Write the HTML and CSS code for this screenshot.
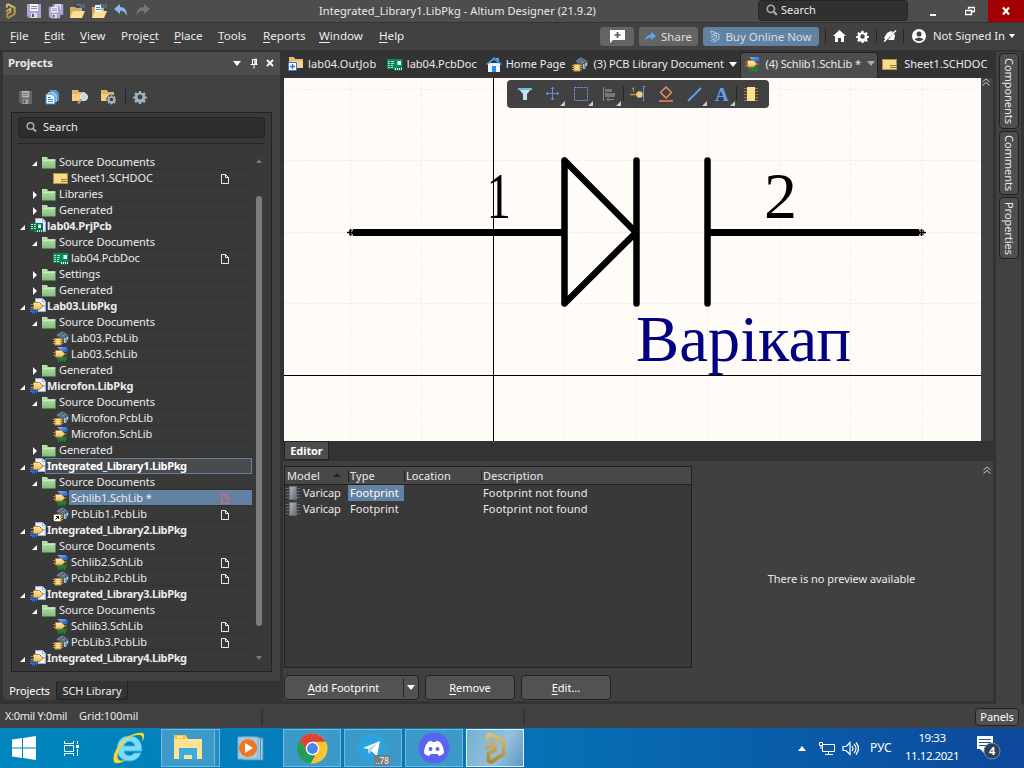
FILE: index.html
```html
<!DOCTYPE html>
<html lang="en">
<head>
<meta charset="utf-8">
<title>Integrated_Library1.LibPkg - Altium Designer (21.9.2)</title>
<link rel="stylesheet" href="styles.css">
</head>
<body>
<svg class="defs" width="0" height="0">
  <defs>
    <linearGradient id="gGreen" x2="0" y2="1"><stop stop-color="#bfe6b3"/><stop offset="1" stop-color="#7fbd77"/></linearGradient>
    <linearGradient id="gGold" x2="0" y2="1"><stop stop-color="#fff0b0"/><stop offset="1" stop-color="#e9b95c"/></linearGradient>
    <linearGradient id="gBlue" x2="1" y2="1"><stop stop-color="#7fb4ff"/><stop offset="1" stop-color="#1c55c8"/></linearGradient>
    <linearGradient id="gGray" x2="1" y2="1"><stop stop-color="#b4b9c2"/><stop offset="1" stop-color="#626872"/></linearGradient>
    <linearGradient id="gAlt" gradientUnits="userSpaceOnUse" x1="0" y1="0" x2="0" y2="34"><stop stop-color="#e0c47c"/><stop offset="1" stop-color="#a98436"/></linearGradient>
    <symbol id="folder" viewBox="0 0 16 16"><path d="M0 3h5l1 2h7.500v9.500H0z" fill="url(#gGreen)"/><path d="M.5 6.500h12.500" stroke="#c8ebbe"/></symbol>
    <symbol id="sheet" viewBox="0 0 16 16"><rect x="0.500" y="3.500" width="14" height="10" fill="#f8dc86" stroke="#b09247"/><path d="M8 9.500h6M8 11.500h6" stroke="#8f7942"/></symbol>
    <symbol id="pcb" viewBox="0 0 16 16"><path d="M0 3h15.500v9H15v2.500H7V13H0z" fill="#0a8a5a"/><path d="M1 5.500h2M1 7.500h2M1 9.500h2M1 11.500h2M4 5.500h3M4 7.500h3M4 9.500h2M4 11.500h2" stroke="#a6e5c6"/><rect x="10.500" y="5" width="3.500" height="4" fill="#f0fff6"/><path d="M8.500 12v2M10.500 12v2M12.500 12v2M14.500 12v2" stroke="#e7f7ce"/></symbol>
    <symbol id="prj" viewBox="0 0 16 16"><path d="M5.500 0.500h7l3 3v10h-10z" fill="#e9eefc" stroke="#9fadd3"/><path d="M12.500 .5v3h3" fill="#fff" stroke="#a0add3"/><path d="M0 5h13v9H6v-1H0z" fill="#07704a"/><path d="M1 6.500h2M1 8.500h2M1 10.500h2M4 6.500h2M4 8.500h2M4 10.500h2M7.500 12v2M9.500 12v2M11.500 12v2" stroke="#bdeacb"/><rect x="8" y="6.500" width="3" height="3.500" fill="#eafff5"/></symbol>
    <symbol id="pkg" viewBox="0 0 16 16"><path d="M5.500 .5h7l3 3v10h-10z" fill="#e9eefc" stroke="#a1afd4"/><path d="M12.500 .5v3h3" fill="#fff" stroke="#a1afd4"/><path d="M1 9h7v5H1z" fill="#2259b8"/><path d="M2.500 13v2.500M4.500 13v2.500M6.500 13v2.500M0 9.500h2M0 11.500h2M0 13.500h2" stroke="#2b77e8"/><path d="M3.500 4.500h6l3.500 3.500-3.500 3.500h-6zM1 6.500h2M1 9.500h2M13 8h2" fill="url(#gGold)" stroke="#b58632"/></symbol>
    <symbol id="sch" viewBox="0 0 16 16"><path d="M4 1h8a3 3 0 0 1 2 5H6q2-2-2-5z" fill="url(#gBlue)"/><path d="M5 11h8v3H5zM5.500 13v3M7.500 13v3M9.500 13v3M11.500 13v3" fill="#187c28" stroke="#28832d"/><path d="M2.500 4.500h6l3.500 3.500-3.500 3h-6zM0 6.500h2M0 9.500h2M12 8h2" fill="url(#gGold)" stroke="#ae8437"/></symbol>
    <symbol id="lib" viewBox="0 0 16 16"><path d="M3 5l6-4 7 4v4l-5 4-5-4z" fill="#46596a"/><path d="M4 5l5-3.500L14 5l-4 3z" fill="#7d93a4"/><path d="M6 4l5 3.500M8 2.500l5 3.500M6.500 6.500l5-4" stroke="#475b6c"/><path d="M11.500 8v4.500h1.500V8l1.500-1v3" fill="none" stroke="#b4cdd9"/><path d="M0 9.500h10M0 11.500h10M0 13.500h10" stroke="#c59a41"/><rect x="2" y="8.500" width="6" height="6.500" fill="#f7d78b" stroke="#bb9140"/></symbol>
    <symbol id="pagedoc" viewBox="0 0 10 12"><path d="M1.500 1.500h4l3 3v6h-7zM5.500 1.500v3h3" fill="none" stroke="currentColor"/></symbol>
    <symbol id="floppy" viewBox="0 0 16 16"><path d="M1 1h14v14H3l-2-2z" fill="currentColor"/><path d="M4 1h8v7H4z" fill="#f0f0f8"/><path d="M5 3.500h6M5 5.500h6" stroke="#888899"/><path d="M5 10h6v5H5z" fill="#ddd"/><path d="M6 11h2v3H6z" fill="#555570"/></symbol>
    <symbol id="open" viewBox="0 0 16 16"><path d="M1 4h5l1 1h6v10H1z" fill="#d8ab60"/><path d="M1 15l3-7h12l-3 7z" fill="#ffdf96"/><path d="M8 2q4-2 5 2m-2 0h4v-3" fill="none" stroke="#4d84a8" stroke-width="1.200"/></symbol>
    <symbol id="alt" viewBox="0 0 24 34"><path d="M4 10V4l3-1.500L21 9.500v14L8 31.500M2 18l10-6v7l-7 4v7.500l3 1.500 7-4.500" fill="none" stroke="url(#gAlt)" stroke-width="4"/></symbol>
    <symbol id="search" viewBox="0 0 16 16"><circle cx="6.500" cy="6.500" r="4.800" fill="none" stroke="currentColor" stroke-width="2.200"/><path d="M10 10l4.500 4.500" stroke="currentColor" stroke-width="3"/></symbol>
    <symbol id="gear" viewBox="0 0 16 16"><path fill-rule="evenodd" fill="currentColor" d="M6.800 1h2.400l.4 2 1.500.6 1.700-1.100 1.700 1.700-1.100 1.700.6 1.500 2 .4v1.600l-2 .5-.6 1.500 1.100 1.700-1.700 1.700-1.700-1.100-1.500.6-.4 2H6.800l-.4-2-1.500-.6-1.700 1.100-1.700-1.700 1.100-1.700-.6-1.500-2-.4V7.800l2-.4.6-1.500-1.100-1.700 1.700-1.700 1.700 1.100 1.500-.6zM8 5.200a2.800 2.800 0 1 0 0 5.600 2.800 2.800 0 0 0 0-5.600z"/></symbol>
    <symbol id="chip" viewBox="0 0 14 16"><path d="M0 3.500h14M0 6.500h14M0 9.500h14M0 12.500h14" stroke="#676b72"/><rect x="3.500" y="1.500" width="7" height="13" fill="url(#gGray)" stroke="#686d75"/></symbol>
    <symbol id="chev" viewBox="0 0 8 8"><path d="M.5 4L4 1l3.500 3M.5 7.500L4 4.500l3.500 3" fill="none" stroke="#ccc"/></symbol>
  </defs>
</svg>
<div class="app">
  <header class="titlebar">
    <div class="quick">
      <svg class="q-logo" width="11" height="16"><use href="#alt"/></svg>
      <svg class="lilac" width="16" height="16"><use href="#floppy"/></svg>
      <svg class="lilac" width="16" height="16" viewBox="0 0 16 16"><use href="#floppy" x="4" width="12" height="13"/><use href="#floppy" x="0" y="3" width="13" height="13"/></svg>
      <svg width="16" height="16"><use href="#open"/></svg>
      <svg width="16" height="16" viewBox="0 0 16 16"><use href="#open"/><path d="M4 2h6l1 7H4z" fill="#eef3ff"/><path d="M5 4.500h4M5 6.500h5" stroke="#448ac0"/></svg>
      <svg width="16" height="16" viewBox="0 0 16 16"><path d="M1 6l6-5v3q7 0 7 9-3-6-7-5v3z" fill="#8ab8f3"/></svg>
      <svg width="16" height="16" viewBox="0 0 16 16"><path d="M15 6L9 1v3Q2 4 1 13q3-6 8-5v3z" fill="#777"/></svg>
    </div>
    <div class="title">Integrated_Library1.LibPkg - Altium Designer (21.9.2)</div>
    <div class="topsearch"><svg width="12" height="12"><use href="#search"/></svg>Search</div>
    <div class="winbtn min"><svg width="10" height="12" viewBox="0 0 10 12"><path d="M2 9h6" stroke="#fff" stroke-width="2"/></svg></div>
    <div class="winbtn"><svg width="10" height="10" viewBox="0 0 10 10"><path d="M3.500 3V1.500h6v4H7M.5 4.500h6v4h-6zM3 1.500h7M0 4.500h7" fill="none" stroke="#fff" stroke-width="1.300"/></svg></div>
    <div class="winbtn close"><svg width="10" height="10" viewBox="0 0 10 10"><path d="M2 1.500l6 7M8 1.500l-6 7" stroke="#fff" stroke-width="2.200"/></svg></div>
  </header>
  <nav class="menubar">
    <div class="menus">
      <span><u>F</u>ile</span><span><u>E</u>dit</span><span><u>V</u>iew</span><span>Proje<u>c</u>t</span><span><u>P</u>lace</span><span><u>T</u>ools</span><span><u>R</u>eports</span><span><u>W</u>indow</span><span><u>H</u>elp</span>
    </div>
    <div class="mbtn note"><svg width="17" height="13" viewBox="0 0 17 13"><path d="M1 0h15v10H4l-3 3z" fill="#fff"/><path d="M8.500 2v6M5.500 5h6" stroke="#555" stroke-width="1.600"/></svg></div>
    <div class="mbtn share"><svg width="11" height="9" viewBox="0 0 11 9"><path d="M0 8q1-5 6-5V0l5 4-5 4V5.500Q3 5 0 8z" fill="#58a9f6"/></svg>Share</div>
    <div class="mbtn buy"><svg width="10" height="13" viewBox="0 0 10 13" fill="none" stroke="#b8cfe4"><path d="M1 3V1l8 3v5l-6 3M1 5l5-1.500M1 7.500L6.500 5v3L1 10.500"/></svg>Buy Online Now</div>
    <i class="vsep"></i>
    <svg class="home" width="13" height="12" viewBox="0 0 13 12"><path d="M6.500 0l6.500 6h-2v6H8V8H5v4H2V6H0z" fill="#fff"/></svg>
    <svg class="gear" width="13" height="13"><use href="#gear"/></svg>
    <i class="vsep"></i>
    <svg class="bell" width="14" height="12" viewBox="0 0 14 12"><path d="M1 8l3-5 4-2 2 1-7 8zM5 10l6-7 1 3-1 4z" fill="#fff"/><path d="M1 11.500L13 .5" stroke="#fff" stroke-width="1.500"/></svg>
    <i class="vsep"></i>
    <svg class="user" width="14" height="14" viewBox="0 0 14 14"><circle cx="7" cy="7" r="7" fill="#fff"/><circle cx="7" cy="5" r="2.500" fill="#414141"/><path d="M2.500 10.500Q7 6.500 11.500 10.500 7 14 2.500 10.500" fill="#414141"/></svg>
    <span class="signin">Not Signed In</span><i class="down small"></i>
  </nav>
  <main class="work">
    <aside class="projects">
      <div class="phead"><b>Projects</b><i class="down"></i><svg width="8" height="11" viewBox="0 0 8 11"><path d="M2.500 1v5M5 1v5" stroke="#fff"/><path d="M5 1h1.500v5H5zM2 1.500h4M.5 6.500h7M4 6v4.500" stroke="#fff" fill="none"/></svg><svg width="8" height="8" viewBox="0 0 8 8"><path d="M1 1l6 6M7 1l-6 6" stroke="#fff" stroke-width="1.800"/></svg></div>
      <div class="pbody">
        <div class="ptools">
          <svg class="grayf" width="15" height="15"><use href="#floppy"/></svg>
          <svg width="15" height="16" viewBox="0 0 15 16"><path d="M5 1h6l3 3v8H5z" fill="#5d92cb"/><path d="M3 3h6l3 3v7H3z" fill="#9bc4ec"/><path d="M1 5h6l3 3v7H1z" fill="#eef6ff" stroke="#4387ca"/><path d="M3 8.500h3M3 10.500h5M3 12.500h5" stroke="#4387ca"/></svg>
          <svg width="17" height="16" viewBox="0 0 17 16"><path d="M0 1h6l1 2h6v9H0z" fill="#ddb56d"/><path d="M0 5h13v7H0z" fill="#f3cc82"/><circle cx="12" cy="8" r="3.500" fill="#bad8ee" stroke="#e7f3fc"/><path d="M9.500 10.500L6 14.500" stroke="#ca9342" stroke-width="2"/></svg>
          <svg class="fgear" width="17" height="16" viewBox="0 0 17 16"><path d="M0 1h6l1 2h6v9H0z" fill="#ddb56d"/><path d="M0 5h13v7H0z" fill="#f3cc82"/><circle cx="10.500" cy="10.500" r="5" fill="#414141"/><use href="#gear" x="5.500" y="5.500" width="10" height="10"/></svg>
          <i class="vsep"></i>
          <svg class="pg" width="14" height="14"><use href="#gear"/></svg>
        </div>
        <div class="treebox">
          <div class="psearch"><svg width="11" height="12"><use href="#search"/></svg>Search</div>
          <div class="treewrap">
            <div class="tree">
              <div class="row l2"><i class="exp"></i><svg><use href="#folder"/></svg><span>Source Documents</span></div>
              <div class="row l3"><i></i><svg><use href="#sheet"/></svg><span>Sheet1.SCHDOC<svg class="doc"><use href="#pagedoc"/></svg></span></div>
              <div class="row l2"><i class="col"></i><svg><use href="#folder"/></svg><span>Libraries</span></div>
              <div class="row l2"><i class="col"></i><svg><use href="#folder"/></svg><span>Generated</span></div>
              <div class="row l1"><i class="exp"></i><svg><use href="#prj"/></svg><span>lab04.PrjPcb</span></div>
              <div class="row l2"><i class="exp"></i><svg><use href="#folder"/></svg><span>Source Documents</span></div>
              <div class="row l3"><i></i><svg><use href="#pcb"/></svg><span>lab04.PcbDoc<svg class="doc"><use href="#pagedoc"/></svg></span></div>
              <div class="row l2"><i class="col"></i><svg><use href="#folder"/></svg><span>Settings</span></div>
              <div class="row l2"><i class="col"></i><svg><use href="#folder"/></svg><span>Generated</span></div>
              <div class="row l1"><i class="exp"></i><svg><use href="#pkg"/></svg><span>Lab03.LibPkg</span></div>
              <div class="row l2"><i class="exp"></i><svg><use href="#folder"/></svg><span>Source Documents</span></div>
              <div class="row l3"><i></i><svg><use href="#lib"/></svg><span>Lab03.PcbLib</span></div>
              <div class="row l3"><i></i><svg><use href="#sch"/></svg><span>Lab03.SchLib</span></div>
              <div class="row l2"><i class="col"></i><svg><use href="#folder"/></svg><span>Generated</span></div>
              <div class="row l1"><i class="exp"></i><svg><use href="#pkg"/></svg><span>Microfon.LibPkg</span></div>
              <div class="row l2"><i class="exp"></i><svg><use href="#folder"/></svg><span>Source Documents</span></div>
              <div class="row l3"><i></i><svg><use href="#lib"/></svg><span>Microfon.PcbLib</span></div>
              <div class="row l3"><i></i><svg><use href="#sch"/></svg><span>Microfon.SchLib</span></div>
              <div class="row l2"><i class="col"></i><svg><use href="#folder"/></svg><span>Generated</span></div>
              <div class="row l1 wide focus"><i class="exp"></i><svg><use href="#pkg"/></svg><span>Integrated_Library1.LibPkg</span></div>
              <div class="row l2"><i class="exp"></i><svg><use href="#folder"/></svg><span>Source Documents</span></div>
              <div class="row l3 sel"><i></i><svg><use href="#sch"/></svg><span>Schlib1.SchLib *<svg class="doc"><use href="#pagedoc"/></svg></span></div>
              <div class="row l3"><i></i><svg viewBox="0 0 16 16"><use href="#lib"/><path d="M1 9h6v6H1z" fill="#fff"/><path d="M2.500 13.500l3-3M3 10.500h2.500V13" stroke="#000" fill="none"/></svg><span>PcbLib1.PcbLib<svg class="doc"><use href="#pagedoc"/></svg></span></div>
              <div class="row l1 wide"><i class="exp"></i><svg><use href="#pkg"/></svg><span>Integrated_Library2.LibPkg</span></div>
              <div class="row l2"><i class="exp"></i><svg><use href="#folder"/></svg><span>Source Documents</span></div>
              <div class="row l3"><i></i><svg><use href="#sch"/></svg><span>Schlib2.SchLib<svg class="doc"><use href="#pagedoc"/></svg></span></div>
              <div class="row l3"><i></i><svg><use href="#lib"/></svg><span>PcbLib2.PcbLib<svg class="doc"><use href="#pagedoc"/></svg></span></div>
              <div class="row l1 wide"><i class="exp"></i><svg><use href="#pkg"/></svg><span>Integrated_Library3.LibPkg</span></div>
              <div class="row l2"><i class="exp"></i><svg><use href="#folder"/></svg><span>Source Documents</span></div>
              <div class="row l3"><i></i><svg><use href="#sch"/></svg><span>Schlib3.SchLib<svg class="doc"><use href="#pagedoc"/></svg></span></div>
              <div class="row l3"><i></i><svg><use href="#lib"/></svg><span>PcbLib3.PcbLib<svg class="doc"><use href="#pagedoc"/></svg></span></div>
              <div class="row l1 wide"><i class="exp"></i><svg><use href="#pkg"/></svg><span>Integrated_Library4.LibPkg</span></div>
            </div>
            <div class="scroll"><i class="up"></i><div class="thumb"></div><i class="dn"></i></div>
          </div>
        </div>
      </div>
      <div class="ptabs"><span class="on">Projects</span><span>SCH Library</span></div>
    </aside>
    <section class="center">
      <div class="doctabs">
        <div class="t1"><svg viewBox="0 0 16 16"><path d="M1 1h5l1 2h8v9H1z" fill="#e7bb73"/><path d="M2 5h13v7H2z" fill="#f8d596"/><path d="M.5 6.500h8v8h-8z" fill="#fff" stroke="#2e77d4"/><path d="M4.500 8v5M2 10.500h5" stroke="#2e77d4" stroke-width="1.400"/></svg><span>lab04.OutJob</span></div>
        <div class="t2"><svg><use href="#pcb"/></svg><span>lab04.PcbDoc</span></div>
        <div class="t3"><svg viewBox="0 0 16 16"><path d="M2 7h12v9H2z" fill="#e8f3ff"/><path d="M10 2h3v4h-3z" fill="#719bc6"/><path d="M0 8l8-7 8 7-1 1-7-5-7 5z" fill="#3c94f2"/><path d="M6 10h4v6H6z" fill="#328af0"/></svg><span>Home Page</span></div>
        <div class="t4"><svg><use href="#lib"/></svg><span>(3) PCB Library Document</span><i class="down"></i></div>
        <div class="t5 active"><svg><use href="#sch"/></svg><span>(4) Schlib1.SchLib *</span><i class="down"></i></div>
        <div class="t6"><svg><use href="#sheet"/></svg><span>Sheet1.SCHDOC</span></div>
      </div>
      <div class="canvasrow">
        <div class="canvas">
          <svg width="697" height="363" viewBox="284 78 697 363">
            <path d="M350.500 78v363M421.500 78v363M564.500 78v363M636.500 78v363M707.500 78v363M779.500 78v363M850.500 78v363M922.500 78v363M284 89.500h697M284 160.500h697M284 232.500h697M284 303.500h697" stroke="#efede9" stroke-dasharray="3 2"/>
            <text x="0" y="0" transform="translate(486.500 218) scale(.74 1)" class="pin">1</text><text x="764" y="218" class="pin">2</text>
            <text x="636" y="361" class="part" textLength="215" lengthAdjust="spacingAndGlyphs">Варікап</text>
            <g stroke="#000" fill="none" stroke-width="7"><path d="M353 232.500H564M708 232.500H919"/><path d="M564.500 160.500v143M636.500 160.500v143M707.500 160.500v143M564.500 160.500L636 232.500 564.500 303.500" stroke-linecap="round" stroke-linejoin="round" stroke-width="6.500"/></g>
            <path d="M349 229h4v7h-4zM919 229h5v7h-5z" fill="#fffcf7"/><path d="M347 232.500h7M350.500 229v7M918 232.500h8M921.500 229v7" stroke="#000" stroke-width="1.500"/><path d="M349.500 230.500h3v4h-3zM919.500 230.500h4v4h-4z" fill="none" stroke="#000" stroke-width=".8"/>
            <path d="M493.500 78v363M284 375.500h697" stroke="#000"/>
          </svg>
          <div class="float">
            <svg width="262" height="28" viewBox="507 80 262 28" fill="none">
              <path d="M518 88h14l-5 6v6h-4v-6z" fill="#c1e3f1"/><path d="M518 88h14v2h-14z" fill="#70b9da"/>
              <path d="M552.500 87v13M546 93.500h13" stroke="#648fdd"/><path d="M551 89l1.500-2 1.500 2M551 98l1.500 2 1.500-2M548 92l-2 1.500 2 1.500M557 92l2 1.500-2 1.500" stroke="#648fdd"/>
              <path d="M574.500 87.500h13v13h-13z" stroke="#6f9bef" stroke-dasharray="2 1"/>
              <path d="M603.500 87v14" stroke="#888"/><path d="M605 89h7v3h-7zM605 93h10v4h-10z" fill="#777"/><path d="M614 99.500h-7m2-2l-2 2 2 2" stroke="#888"/>
              <path d="M623.500 86v15M736.500 86v15" stroke="#272727"/>
              <path d="M630 94.500h7" stroke="#bb9455" stroke-width="1.500"/><circle cx="639.500" cy="94.500" r="3.200" fill="#f3c982"/><path d="M632 89l1.500-1.500V92" stroke="#999"/><path d="M646 86.500h-2.500v15" stroke="#5e9ae6"/>
              <path d="M666 87l5.500 5.500L666 98l-5.500-5.500zM659 101h14" stroke="#ee8962" stroke-width="1.500"/>
              <path d="M688 101l13-13" stroke="#5aa0f0" stroke-width="1.800"/>
              <text x="715" y="101" class="tool-a">A</text>
              <path d="M744 88.500h14M744 91.500h14M744 94.500h14M744 97.500h14M744 100.500h14" stroke="#a17b3b"/><path d="M747 87h8v14h-8z" fill="#ffdf91"/>
              <path d="M565 101v5h-5zM593 101v5h-5zM621 101v5h-5zM707 101v5h-5zM735 101v5h-5z" fill="#ccc"/>
            </svg>
          </div>
        </div>
        <div class="chevbar"><svg width="8" height="8"><use href="#chev"/></svg></div>
      </div>
      <div class="edtabs"><b>Editor</b></div>
      <div class="editor">
        <div class="left">
          <div class="table">
            <div class="th"><span>Model<i></i></span><span>Type</span><span>Location</span><span>Description</span></div>
            <div class="tr"><span><svg width="14" height="16"><use href="#chip"/></svg>Varicap</span><span class="hit">Footprint</span><span></span><span>Footprint not found</span></div>
            <div class="tr"><span><svg width="14" height="16"><use href="#chip"/></svg>Varicap</span><span>Footprint</span><span></span><span>Footprint not found</span></div>
          </div>
          <div class="btns"><div class="btn add"><span><u>A</u>dd Footprint</span><em><i class="down"></i></em></div><div class="btn"><u>R</u>emove</div><div class="btn"><u>E</u>dit...</div></div>
        </div>
        <div class="preview"><span>There is no preview available</span></div>
        <div class="edchev"><svg width="8" height="8"><use href="#chev"/></svg></div>
      </div>
    </section>
    <aside class="dock"><span class="d1">Components</span><span class="d2">Comments</span><span class="d3">Properties</span></aside>
  </main>
  <footer class="status"><span class="pos">X:0mil Y:0mil</span><span class="grid">Grid:100mil</span><i></i><i class="s2"></i><div class="panels">Panels</div></footer>
  <div class="taskbar">
    <svg class="start" width="24" height="24" viewBox="0 0 24 24"><path d="M0 3.500l10-1.400V11.500H0zM11 2l13-2v11.500H11zM0 12.500h10v9.400L0 20.500zM11 12.500h13V24l-13-1.900z" fill="#fff"/></svg>
    <svg class="tview" width="17" height="17" viewBox="0 0 17 17"><path d="M1.500 1v2.500h9V1M1.500 5.500h9v6h-9zM1.500 16v-2.500h9V16M14.500 1v3M14.500 9v7" fill="none" stroke="#fff"/><path d="M13 5h3v3h-3z" fill="#fff"/></svg>
    <svg class="ie" width="32" height="32" viewBox="0 0 32 32"><path d="M16 4C8 4 4 10 4 17s5 12 12 12c6 0 10-3 12-8h-7c-2 4-9 4-10-2h18C29 9 24 4 16 4zm-5 10c1-6 10-6 11 0z" fill="#7ddcfb" stroke="#3cb4e4"/><path d="M1 30C-3 20 15-2 30 1q3 2-1 9 2-8-4-7C13 3 2 21 5 27q3 4 12-1Q4 34 1 30z" fill="#f8d62c"/></svg>
    <div class="task exp1"><svg width="30" height="28" viewBox="0 0 30 28"><path d="M1 2h12l2 3h14v20H1z" fill="#ffe394"/><path d="M1 1h12v4H1z" fill="#f8c63d"/><path d="M4 3h6" stroke="#fff"/><path d="M6 14h18v12h-5v-5h-8v5H6z" fill="#3cabe2"/></svg></div><i class="stack"></i>
    <svg class="wmp" width="27" height="26" viewBox="0 0 27 26"><path d="M6 1l20 2v22H6z" fill="#a7d1e9" stroke="#458eb4"/><path d="M23.500 3v21" stroke="#458eb4"/><path d="M1 2h20v22H1z" fill="#a3cde3" stroke="#77b0cd"/><circle cx="11" cy="13" r="9" fill="#f27520"/><path d="M8 8l8 5-8 5z" fill="#fff"/></svg>
    <div class="task"><svg width="31" height="31" viewBox="0 0 32 32"><circle cx="16" cy="16" r="15.500" fill="#fbc52d"/><path d="M3 7A15.500 15.500 0 0 1 29.500 9H16a7 7 0 0 0-6 10z" fill="#dc4437"/><path d="M3 7l7 12q4 5 9 4l-5 8.500A15.500 15.500 0 0 1 3 7z" fill="#229c59"/><circle cx="16" cy="16" r="7" fill="#fff"/><circle cx="16" cy="16" r="5.600" fill="#4687f0"/></svg></div>
    <div class="task"><svg width="32" height="32" viewBox="0 0 32 32"><circle cx="15" cy="16" r="14" fill="#2aa3df"/><path d="M6 16l17-7-3 15-6-5-2 3-1-5z" fill="#fff"/><path d="M11 17l9-6-6 8-2 3z" fill="#b7d6e8"/></svg><span class="badge">..78</span></div>
    <div class="task"><svg width="32" height="32" viewBox="0 0 32 32"><circle cx="16" cy="16" r="15.500" fill="#5765f2"/><path d="M10 10q2-1.500 4-1l.5 1h3l.5-1q2-.5 4 1 4 5 4 11-3 3-5 3l-1.500-2h-7L11 24q-3 0-5-3 0-6 4-11z" fill="#fff"/><circle cx="12.500" cy="17" r="2" fill="#5765f2"/><circle cx="19.500" cy="17" r="2" fill="#5765f2"/></svg></div>
    <div class="task cur"><svg width="24" height="32"><use href="#alt"/></svg></div>
    <div class="tray">
      <svg width="8" height="5" viewBox="0 0 8 5"><path d="M0 5l4-5 4 5z" fill="#fff"/></svg>
      <svg width="17" height="15" viewBox="0 0 17 15" fill="none" stroke="#fff"><path d="M5 3.500h11.500v7H4.500V5M10.500 11v3M7 13.500h8M1.500 1.500h3v3h-3zM3 5v3"/></svg>
      <svg width="17" height="15" viewBox="0 0 17 15" fill="none" stroke="#fff" stroke-width="1.200"><path d="M1 5.500h3l4-4v12l-4-4H1zM10 5q2 2.500 0 5M12 3q4 4.500 0 9M14 1.500q5 6 0 12"/></svg>
      <span class="lang">РУС</span>
      <span class="clock"><span>19:33</span><span>11.12.2021</span></span>
      <div class="notif"><svg width="25" height="26" viewBox="0 0 25 26"><path d="M1 1h16v13H8v4l-4-4H1z" fill="#fff"/><path d="M3 4.500h12M3 7.500h12M3 10.500h12" stroke="#1b589e"/><circle cx="16" cy="16" r="8" fill="#2e4054" stroke="#7890ab"/><text x="13" y="20">4</text></svg></div>
    </div>
  </div>
</div>
</body>
</html>
```

FILE: styles.css
```css
* { box-sizing: border-box; }
body { margin: 0; background: #333; }
.defs { display: block; position: absolute; }
svg { flex: none; display: block; }
.app { width: 1024px; height: 768px; overflow: hidden; display: flex; flex-direction: column; font: 11px/16px "Noto Sans", "Open Sans", sans-serif; color: #ebebeb; background: #333; white-space: nowrap; }
i, em { font-style: normal; flex: none; display: block; }
u { text-underline-offset: 2px; }
.down { width: 0; border: 4px solid transparent; border-top: 5px solid #fff; border-bottom: 0; }
.down.small { border-width: 4px 3px 0; }
.vsep { width: 1px; height: 14px; background: #242424; }

.titlebar { height: 23px; background: #4d4d4d; border-bottom: 1px solid #333; display: flex; align-items: center; }
.quick { width: 152px; padding-left: 5px; display: flex; gap: 6px; align-items: center; }
.quick svg + svg { margin-left: -.2px; }
.quick .q-logo { margin-right: 4px; }
.title { width: 606px; padding-left: 167px; letter-spacing: .08px; }
.lilac { color: #a9a4d8; }
.topsearch { width: 150px; height: 21px; margin-bottom: 1px; border: 1px solid #262626; border-radius: 4px; background: #303030; display: flex; align-items: center; gap: 3px; padding-left: 7px; line-height: 18px; padding-bottom: 1px; }
.topsearch svg, .psearch svg { color: #aaa; }
.winbtn { flex: 1; height: 22px; display: grid; place-items: center; }
.winbtn.min { flex: 0 0 43px; padding: 1px 0 0 7px; }
.winbtn.close { background: #a30004; flex: 0 0 36px; }

.menubar { height: 27px; background: #414141; display: flex; align-items: center; padding-bottom: 1px; font-size: 12px; }
.menus { width: 600px; flex: none; padding-left: 10px; padding-bottom: 1px; display: grid; grid-template-columns: 34px 36px 41px 53px 44px 45px 56px 60px 40px; font-size: 11.600px; }
.mbtn { height: 19px; border-radius: 3px; background: #646464; display: flex; flex: none; align-items: center; justify-content: center; gap: 5px; color: #ddd; font-size: 11.500px; margin-top: 1px; line-height: 17px; padding-bottom: 1px; }
.note { width: 34px; margin-right: 5px; }
.share { width: 59px; margin-right: 5px; }
.buy { width: 116px; background: #6282a3; gap: 5px; margin-right: 6px; letter-spacing: -.03px; }
.home { margin-left: 7px; }
.menubar .gear { margin: 0 7px 0 10px; color: #fff; }
.bell { margin: 0 6px 0 6px; }
.user { margin: 0 7px 0 8px; }
.signin { width: 76px; flex: none; font-size: 11.300px; letter-spacing: -.05px; padding-bottom: 1px; }

.work { height: 654px; display: flex; padding-top: 2px; }
.projects { width: 277px; margin-left: 3px; display: flex; flex-direction: column; }
.phead { height: 23px; background: #4d4d4d; display: flex; align-items: center; padding: 0 6px 1px 5px; gap: 8px; }
.phead b { flex: 1; font-size: 11.400px; letter-spacing: -.1px; }
.phead i { margin-right: 1px; }
.pbody { height: 606px; background: #414141; padding: 0 8px 9px; display: flex; flex-direction: column; }
.ptools { height: 37px; padding: 7px 0 0 7px; display: flex; align-items: center; gap: 12px; }
.ptools .vsep { margin: 0 -5px; height: 16px; }
.ptools .grayf { color: #777; opacity: .65; }
.fgear, .pg { color: #9fb2bf; }
.treebox { flex: 1; border: 1px solid #222; background: #393939; padding: 4px 6px 0; }
.psearch { height: 21px; border: 1px solid #222; border-radius: 4px; background: #2e2e2e; display: flex; align-items: center; gap: 6px; padding: 0 0 2px 7px; }
.treewrap { border-top: 1px solid #242424; margin-top: 5px; padding-top: 10px; display: flex; }
.tree { width: 234px; }
.row { height: 16px; display: flex; align-items: stretch; }
.row > svg { width: 16px; height: 16px; margin: 0 1px 0 3px; }
.l1 { padding-left: 2px; font-weight: bold; }
.l2 { padding-left: 14px; }
.l3 { padding-left: 26px; }
.l3 > svg { margin-left: 2px; margin-right: 2px; }
.row > i { width: 7px; height: 16px; }
.exp::before { content: ""; display: block; width: 5px; height: 5px; background: #fff; clip-path: polygon(100% 0, 100% 100%, 0 100%); margin-top: 7px; }
.col::before { content: ""; display: block; width: 4px; height: 8px; background: #fff; clip-path: polygon(0 0, 100% 50%, 0 100%); margin: 5px 0 0 1px; }
.row > span { flex: 1; line-height: 15px; border-bottom: 1px solid #303030; display: flex; justify-content: space-between; letter-spacing: -.1px; }
.row.l1 > span { letter-spacing: -.2px; border-bottom-color: #353535; }
.row.wide > span { letter-spacing: -.36px; }
.doc { width: 10px; height: 12px; margin: 3px 22px 0 0; }
.focus > span { outline: 1px solid #6282a3; outline-offset: -1px; background: #4b4b4b; margin-left: -2px; padding-left: 2px; color: #fff; }
.sel > span { background: #6282a3; margin-left: -2px; padding-left: 2px; }
.sel .doc { color: #f36461; }
.scroll { width: 6px; margin-left: 4px; padding: 5px 0 4px; display: flex; flex-direction: column; }
.thumb { height: 430px; margin: 33px 0 30px; border-radius: 3px; background: #7c7c7c; }
.up, .dn { border: 3px solid transparent; border-bottom: 4px solid #777; border-top: 0; }
.dn { border-top: 4px solid #777; border-bottom: 0; }
.ptabs { display: flex; height: 19px; letter-spacing: -.08px; }
.ptabs span { height: 19px; border: 1px solid #222; border-top: 0; border-radius: 0 0 4px 4px; width: 72px; text-align: center; line-height: 20px; }
.ptabs .on { width: 53px; background: #414141; border-color: #414141; color: #fff; }

.center { width: 709px; margin-left: 4px; display: flex; flex-direction: column; }
.doctabs { height: 26px; display: flex; }
.doctabs div { height: 26px; display: flex; align-items: center; gap: 4px; padding: 0 0 2px 4px; }
.doctabs svg { width: 16px; height: 16px; }
.doctabs .t1 { width: 99px; letter-spacing: .15px; }
.doctabs .t2 { width: 99px; }
.doctabs .t3 { width: 87px; }
.doctabs .t4 { width: 172px; gap: 5px; letter-spacing: -.08px; }
.doctabs .t4 i, .doctabs .t5 i { margin-left: auto; }
.doctabs .t4 i { margin-right: 4px; }
.doctabs .t5 i { margin-right: 2px; border-top-color: #aaa; }
.doctabs .active { width: 138px; background: #4d4d4d; border: 1px solid #232323; border-bottom: 0; border-radius: 4px 4px 0 0; letter-spacing: -.13px; padding-bottom: 4px; }
.doctabs .t6 { width: 115px; gap: 6px; }
.canvasrow { height: 363px; display: flex; }
.canvas { width: 697px; background: #fffcf7; position: relative; overflow: hidden; }
.chevbar { flex: 1; background: #414141; }
.chevbar svg { margin: 0 0 0 1px; }
.pin { font: 66px "Liberation Serif", serif; }
.part { font: 65px "Liberation Serif", serif; fill: #000080; }
.float { position: absolute; left: 223px; top: 2px; width: 262px; height: 28px; border-radius: 4px; background: #414141; }
.tool-a { font: bold 19px "Liberation Serif", serif; fill: #5e9ff0; }
.edtabs { height: 20px; }
.edtabs b { display: block; width: 45px; height: 19px; border: 1px solid #222; background: #4d4d4d; text-align: center; line-height: 18px; color: #fff; letter-spacing: -.1px; }
.editor { height: 240px; margin-left: -1px; padding-left: 1px; background: #404040; display: flex; }
.left { width: 408px; padding-top: 5px; }
.table { height: 202px; border: 1px solid #222; background: #393939; }
.th, .tr { display: grid; grid-template-columns: 63px 56px 77px 1fr; height: 16px; letter-spacing: .1px; }
.th { height: 18px; background: #484848; border-bottom: 1px solid #222; line-height: 18px; align-items: center; }
.th span { border-left: 1px solid #242424; height: 12px; line-height: 12px; padding-left: 1px; display: flex; }
.th span:first-child { border-left: 0; padding-left: 2px; }
.th i { margin: 3px 0 0 13px; border: 4px solid transparent; border-bottom: 4px solid #222; border-top: 0; height: 0; }
.tr span { display: flex; align-items: center; padding-left: 2px; }
.tr span:first-child { gap: 3px; padding-left: 1px; letter-spacing: -.05px; }
.tr span:last-child { letter-spacing: .15px; }
.hit { background: #6282a3; color: #fff; }
.btns { display: flex; gap: 6px; padding-top: 7px; }
.btn { width: 90px; height: 25px; border: 1px solid #222; border-radius: 4px; background: #525252; text-align: center; line-height: 24px; color: #fff; }
.add { width: 135px; display: flex; }
.add span { flex: 1; padding-right: 1px; }
.add em { width: 15px; margin: 2px 0; border-left: 1px solid #262626; padding: 7px 0 0 3px; }
.preview { width: 289px; padding: 110px 0 0 10px; text-align: center; letter-spacing: -.03px; }
.edchev { padding: 5px 0 0 2px; }
.dock { width: 25px; margin-left: 3px; padding: 1px 0 0 3px; background: #414141; display: flex; flex-direction: column; gap: 2px; }
.dock span { width: 20px; border: 1px solid #222; border-radius: 4px; background: #4e4e4e; writing-mode: vertical-rl; text-align: center; line-height: 18px; letter-spacing: -.05px; }
.d1 { height: 76px; } .d2 { height: 64px; } .d3 { height: 62px; }

.status { height: 24px; background: #414141; display: flex; align-items: center; }
.pos { width: 79px; padding-left: 5px; letter-spacing: -.3px; } .grid { width: 182px; letter-spacing: -.05px; }
.status i { width: 2px; height: 17px; background: #333; margin-top: 3px; }
.status .s2 { margin-left: 260px; }
.panels { width: 44px; height: 18px; margin: 2px 5px 0 auto; border: 1px solid #222; border-radius: 4px; background: #525252; text-align: center; color: #fff; letter-spacing: -.1px; }
.taskbar { height: 40px; display: flex; align-items: center; background: linear-gradient(90deg, #0086bd, #0578b8 45%, #0866b0 65%, #0d489b); font-size: 12px; color: #fff; }
.start { margin-left: 12px; } .tview { margin-left: 27px; } .ie { margin-left: 33px; }
.task { width: 58px; height: 38px; margin-right: 3px; border: 1px solid #76b9dc; background: #3c99c8; display: grid; place-items: center; position: relative; }
.exp1 { width: 54px; margin: 0 0 0 16px; }
.stack { width: 5px; height: 38px; border: 1px solid #76b9dc; border-left: 0; background: #238cc3; }
.wmp { margin: 0 19px 0 17px; }
.badge { position: absolute; left: 29px; top: 25px; width: 16px; height: 11px; border-radius: 2px; background: #777d82; font-size: 8px; line-height: 11px; text-align: center; }
.cur { border-color: #e6eef4; background: linear-gradient(120deg, #73b0d3, #96c0da 60%, #5c98c4); }
.tray { margin-left: auto; width: 226px; display: flex; align-items: center; }
.tray > svg:nth-child(2) { margin: 0 7px 0 12px; }
.lang { margin-left: 11px; width: 35px; }
.clock { width: 54px; display: flex; flex-direction: column; line-height: 18px; align-items: center; letter-spacing: -.48px; font-size: 11.500px; padding-bottom: 2px; }
.notif { margin-left: 17px; font: bold 11px "Noto Sans", sans-serif; }
.notif text { fill: #fff; }
```
